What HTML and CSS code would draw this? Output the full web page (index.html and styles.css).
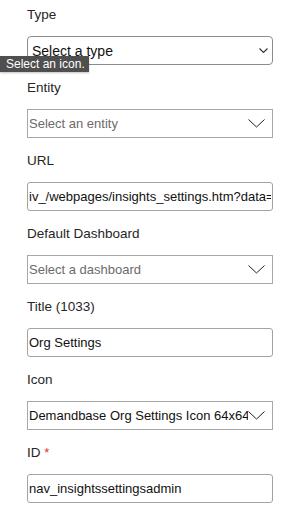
FILE: index.html
```html
<!DOCTYPE html>
<html lang="en">
<head>
<meta charset="utf-8">
<title>Form</title>
<link rel="stylesheet" href="styles.css">
</head>
<body>
<form class="form">
  <div class="field">
    <label class="label">Type</label>
    <div class="select-wrap native">
      <select class="control select native-select"><option>Select a type</option></select>
      <svg class="chev-small" width="9" height="5" viewBox="0 0 9 5"><path d="M0.5 0.5 L4.5 4.5 L8.5 0.5" fill="none" stroke="#333" stroke-width="1.1"/></svg>
    </div>
  </div>
  <div class="field">
    <label class="label">Entity</label>
    <div class="select-wrap">
      <select class="control select placeholder"><option>Select an entity</option></select>
      <svg class="chev" width="17" height="9" viewBox="0 0 17 9"><path d="M0.5 0.5 L8.5 8 L16.5 0.5" fill="none" stroke="#222" stroke-width="1"/></svg>
    </div>
  </div>
  <div class="field">
    <label class="label">URL</label>
    <input class="control input" type="text" value="iv_/webpages/insights_settings.htm?data=">
  </div>
  <div class="field">
    <label class="label">Default Dashboard</label>
    <div class="select-wrap">
      <select class="control select placeholder"><option>Select a dashboard</option></select>
      <svg class="chev" width="17" height="9" viewBox="0 0 17 9"><path d="M0.5 0.5 L8.5 8 L16.5 0.5" fill="none" stroke="#222" stroke-width="1"/></svg>
    </div>
  </div>
  <div class="field">
    <label class="label">Title (1033)</label>
    <input class="control input" type="text" value="Org Settings">
  </div>
  <div class="field">
    <label class="label">Icon</label>
    <div class="select-wrap">
      <select class="control select"><option>Demandbase Org Settings Icon 64x64</option></select>
      <svg class="chev" width="17" height="9" viewBox="0 0 17 9"><path d="M0.5 0.5 L8.5 8 L16.5 0.5" fill="none" stroke="#222" stroke-width="1"/></svg>
    </div>
  </div>
  <div class="field">
    <label class="label">ID <span class="req">*</span></label>
    <input class="control input" type="text" value="nav_insightssettingsadmin">
  </div>
</form>
<div class="tooltip">Select an icon.</div>
</body>
</html>
```

FILE: styles.css
```css
html, body {
  margin: 0;
  padding: 0;
  background: #ffffff;
}

body {
  width: 297px;
  height: 512px;
  overflow: hidden;
  position: relative;
  font-family: "Liberation Sans", Arial, sans-serif;
  color: #222;
}

.form {
  display: flex;
  flex-direction: column;
  padding: 5px 0 0 27px;
  width: 246px;
}

.field {
  display: flex;
  flex-direction: column;
  gap: 11px;
  margin-bottom: 13px;
}

.label {
  display: block;
  height: 20px;
  line-height: 20px;
  font-size: 13.5px;
  color: #262626;
}

.req {
  color: #e0352b;
  font-size: 13px;
}

.control {
  box-sizing: border-box;
  width: 246px;
  height: 29px;
  margin: 0;
  background: #fff;
  font-family: "Liberation Sans", Arial, sans-serif;
  font-size: 13px;
  color: #111;
  outline: none;
}

.input {
  border: 1px solid #a3a3a3;
  border-radius: 3px;
  padding: 0 1px;
}

.select-wrap {
  position: relative;
  width: 246px;
  height: 29px;
}

.select {
  -webkit-appearance: none;
  appearance: none;
  border: 1px solid #a8a8a8;
  border-radius: 0;
  padding: 0 22px 0 1px;
}

.placeholder {
  color: #6b6b6b;
}

.native-select {
  border: 1px solid #8c8c8c;
  border-radius: 4px;
  padding: 0 22px 0 4px;
  font-size: 14px;
  color: #111;
}

.chev {
  position: absolute;
  right: 8px;
  top: 10px;
  pointer-events: none;
  background: #fff;
}

.chev-small {
  position: absolute;
  right: 5px;
  top: 12px;
  pointer-events: none;
}

.tooltip {
  position: absolute;
  left: 0;
  top: 56px;
  height: 16px;
  line-height: 16px;
  padding: 0 4px 0 6px;
  background: #4f4f4f;
  color: #fff;
  font-size: 12px;
  font-family: "Liberation Sans", Arial, sans-serif;
  box-shadow: 0 1px 2px rgba(0,0,0,0.25);
}
```
